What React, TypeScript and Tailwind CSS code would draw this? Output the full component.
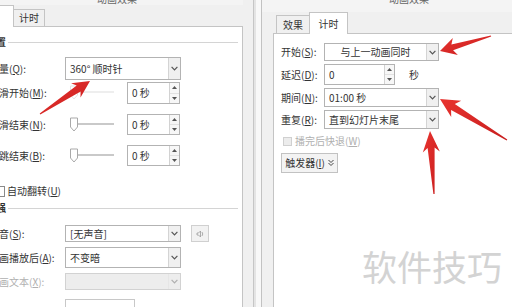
import React from "react";

const FONT = "font-['Noto_Sans_CJK_SC','Noto_Sans',sans-serif]";

function Chevron() {
  return (
    <svg width="7" height="5" viewBox="0 0 7 5">
      <path d="M0.6 0.8 L3.5 3.8 L6.4 0.8" fill="none" stroke="#555" strokeWidth="1.2" />
    </svg>
  );
}

function Dropdown({
  text,
  className,
  disabled,
  center,
}: {
  text: string;
  className: string;
  disabled?: boolean;
  center?: boolean;
}) {
  return (
    <div
      className={`flex border ${
        disabled ? "border-[#d2d2d2] bg-[#ededed]" : "border-[#b3b3b3] bg-white"
      } ${className}`}
    >
      <div
        className={`flex-1 flex items-center ${
          center ? "justify-center" : "pl-[4px]"
        } text-[10px] leading-none text-[#333] whitespace-nowrap overflow-hidden`}
      >
        {text}
      </div>
      <div
        className={`w-[12px] flex items-center justify-center border-l ${
          disabled ? "border-[#dcdcdc] opacity-40" : "border-[#d4d4d4] bg-[#f0f0f0]"
        }`}
      >
        <Chevron />
      </div>
    </div>
  );
}

function Spin({ text, className }: { text: string; className: string }) {
  return (
    <div className={`flex border border-[#b3b3b3] bg-white ${className}`}>
      <div className="flex-1 pl-[4px] flex items-center text-[10px] leading-none text-[#333] whitespace-nowrap">
        {text}
      </div>
      <div className="w-[10px] flex flex-col border-l border-[#d2d2d2] bg-[#f7f7f7]">
        <div className="flex-1 flex items-center justify-center border-b border-[#e2e2e2]">
          <svg width="5" height="3" viewBox="0 0 5 3">
            <path d="M0 3 L2.5 0 L5 3Z" fill="#555" />
          </svg>
        </div>
        <div className="flex-1 flex items-center justify-center">
          <svg width="5" height="3" viewBox="0 0 5 3">
            <path d="M0 0 L2.5 3 L5 0Z" fill="#555" />
          </svg>
        </div>
      </div>
    </div>
  );
}

function Slider({ faded }: { faded?: boolean }) {
  return (
    <svg width="44" height="16" viewBox="0 0 44 16" className={faded ? "opacity-30" : ""}>
      <line x1="4" y1="7" x2="44" y2="7" stroke="#c9c9c9" strokeWidth="2" />
      <path d="M0.5 1 L7.5 1 L7.5 10 L4 14 L0.5 10Z" fill="#fff" stroke="#a9a9a9" strokeWidth="1" />
    </svg>
  );
}

function Label({ children, faded, className }: { children: React.ReactNode; faded?: boolean; className: string }) {
  return (
    <div
      className={`${className} shrink-0 text-[10px] leading-none whitespace-nowrap ${
        faded ? "text-[#b0b0b0]" : "text-[#333]"
      }`}
    >
      {children}
    </div>
  );
}

function SectionHeader({ text, className }: { text: string; className: string }) {
  return (
    <div className={`flex items-center h-[14px] ${className}`}>
      <div className="w-[22px] text-[10px] leading-none font-bold text-[#333]">{text}</div>
      <div className="flex-1 h-px bg-[#d4d4d4] mr-[4px]" />
    </div>
  );
}

function arrowPoints(
  tx: number,
  ty: number,
  hx: number,
  hy: number,
  headLen: number,
  headW: number,
  shaftW: number
) {
  const dx = hx - tx;
  const dy = hy - ty;
  const L = Math.hypot(dx, dy);
  const ux = dx / L;
  const uy = dy / L;
  const px = -uy;
  const py = ux;
  const bx = hx - ux * headLen;
  const by = hy - uy * headLen;
  const nx = hx - ux * headLen * 0.8;
  const ny = hy - uy * headLen * 0.8;
  const pts = [
    [tx + px * 0.6, ty + py * 0.6],
    [nx + (px * shaftW) / 2, ny + (py * shaftW) / 2],
    [bx + (px * headW) / 2, by + (py * headW) / 2],
    [hx, hy],
    [bx - (px * headW) / 2, by - (py * headW) / 2],
    [nx - (px * shaftW) / 2, ny - (py * shaftW) / 2],
    [tx - px * 0.6, ty - py * 0.6],
  ];
  return pts.map((p) => `${p[0].toFixed(1)},${p[1].toFixed(1)}`).join(" ");
}

function Arrows() {
  const arrows = [
    { t: [40, 114], h: [90, 81], hl: 17, hw: 17, sw: 7 },
    { t: [491, 36], h: [440, 51], hl: 16, hw: 18, sw: 6 },
    { t: [507, 140], h: [440, 99], hl: 19, hw: 19, sw: 7 },
    { t: [434, 194], h: [430, 131], hl: 21, hw: 17, sw: 7 },
  ];
  return (
    <svg className="absolute left-0 top-0 pointer-events-none" width="512" height="307" viewBox="0 0 512 307">
      <defs>
        <linearGradient id="rg" x1="0" y1="0" x2="1" y2="1">
          <stop offset="0" stopColor="#e8332f" />
          <stop offset="1" stopColor="#c81e1e" />
        </linearGradient>
      </defs>
      {arrows.map((a, i) => (
        <polygon
          key={i}
          points={arrowPoints(a.t[0], a.t[1], a.h[0], a.h[1], a.hl, a.hw, a.sw)}
          fill="url(#rg)"
        />
      ))}
    </svg>
  );
}

function LeftDialog() {
  return (
    <div className="w-[256px] shrink-0 flex bg-[#f0f0f0]">
      <div className="w-[243px] flex flex-col overflow-hidden">
        <div className="h-[12px] pl-[97px] bg-[#f4f4f4]">
          <div className="-mt-[7px] text-[10px] leading-[12px] text-[#666]">动画效果</div>
        </div>
        <div className="h-[21px] flex items-end">
          <div className="w-[14px] h-[22px] -mb-px relative z-10 bg-white border-t border-r border-[#c4c4c4]" />
          <div className="w-[31px] h-[17px] bg-[#f0f0f0] border-t border-r border-[#c4c4c4] flex items-center justify-center text-[10px] leading-none text-[#333]">
            计时
          </div>
        </div>
        <div className="flex-1 bg-white border-t border-r border-[#c4c4c4]">
          <div className="-ml-[14px] flex flex-col">
            <SectionHeader text="设置" className="mt-[8px]" />
            <div className="pl-[3px] flex flex-col">
              <div className="mt-[8px] h-[23px] flex items-center">
                <Label className="w-[76px]">
                  数量(<u>Q</u>):
                </Label>
                <Dropdown text="360° 顺时针" className="w-[116px] h-full" />
              </div>
              <div className="mt-[2px] h-[22px] flex items-center">
                <Label className="w-[76px]">
                  平滑开始(<u>M</u>):
                </Label>
                <div className="ml-[5px] flex items-center">
                  <Slider faded />
                </div>
                <Spin text="0 秒" className="ml-[13px] w-[53px] h-full" />
              </div>
              <div className="mt-[10px] h-[21px] flex items-center">
                <Label className="w-[76px]">
                  平滑结束(<u>N</u>):
                </Label>
                <div className="ml-[5px] flex items-center">
                  <Slider />
                </div>
                <Spin text="0 秒" className="ml-[13px] w-[53px] h-full" />
              </div>
              <div className="mt-[10px] h-[21px] flex items-center">
                <Label className="w-[76px]">
                  弹跳结束(<u>B</u>):
                </Label>
                <div className="ml-[5px] flex items-center">
                  <Slider />
                </div>
                <Spin text="0 秒" className="ml-[13px] w-[53px] h-full" />
              </div>
              <div className="mt-[18px] h-[14px] flex items-center">
                <div className="ml-[5px] w-[11px] h-[11px] border border-[#8a8a8a] bg-white" />
                <div className="ml-[2px] text-[10px] leading-none text-[#333]">
                  自动翻转(<u>U</u>)
                </div>
              </div>
            </div>
            <SectionHeader text="增强" className="mt-[3px]" />
            <div className="pl-[3px] flex flex-col">
              <div className="mt-[10px] h-[17px] flex items-center">
                <Label className="w-[76px]">
                  声音(<u>S</u>):
                </Label>
                <Dropdown text="[无声音]" className="w-[116px] h-full" />
                <div className="ml-[10px] w-[18px] h-[17px] border border-[#d0d0d0] bg-[#f2f2f2] flex items-center justify-center">
                  <svg width="8" height="10" viewBox="0 0 8 10">
                    <path d="M1 4 L2.5 4 L4.5 2 L4.5 8 L2.5 6 L1 6Z" fill="none" stroke="#9a9a9a" strokeWidth="0.8" />
                    <path d="M6 3 Q7.5 5 6 7" fill="none" stroke="#9a9a9a" strokeWidth="0.8" />
                  </svg>
                </div>
              </div>
              <div className="mt-[5px] h-[21px] flex items-center">
                <Label className="w-[76px]">
                  动画播放后(<u>A</u>):
                </Label>
                <Dropdown text="不变暗" className="w-[116px] h-full" />
              </div>
              <div className="mt-[5px] h-[17px] flex items-center">
                <Label className="w-[76px]" faded>
                  动画文本(<u>X</u>):
                </Label>
                <Dropdown text="" disabled className="w-[116px] h-full" />
              </div>
              <div className="mt-[9px] h-[20px] flex items-center">
                <div className="w-[76px]" />
                <div className="w-[70px] h-full border border-[#c8c8c8] bg-white" />
              </div>
            </div>
          </div>
        </div>
      </div>
      <div className="w-[10px] bg-[#f0f0f0]" />
      <div className="w-px bg-[#c6c6c6]" />
      <div className="w-[2px] bg-[#e4e4e4]" />
    </div>
  );
}

function RightDialog() {
  return (
    <div className="flex-1 flex">
      <div className="w-[5px] bg-[#f8f8f8]" />
      <div className="w-px bg-[#c2c2c2]" />
      <div className="flex-1 flex flex-col bg-[#f0f0f0]">
        <div className="h-[12px] pl-[127px] bg-[#f4f4f4]">
          <div className="-mt-[7px] text-[10px] leading-[12px] text-[#666]">动画效果</div>
        </div>
        <div className="h-[21px] flex items-end pl-[14px]">
          <div className="w-[33px] h-[18px] bg-[#f0f0f0] border-t border-l border-[#c4c4c4] flex items-center justify-center text-[10px] leading-none text-[#333]">
            效果
          </div>
          <div className="w-[39px] h-[22px] -mb-px relative z-10 bg-white border-t border-l border-r border-[#c4c4c4] flex items-center justify-center text-[10px] leading-none text-[#333]">
            计时
          </div>
        </div>
        <div className="flex-1 ml-[11px] bg-white border-t border-l border-[#c4c4c4]">
          <div className="pl-[7px] flex flex-col">
            <div className="mt-[9px] h-[18px] flex items-center">
              <Label className="w-[43px]">
                开始(<u>S</u>):
              </Label>
              <Dropdown text="与上一动画同时" center className="w-[115px] h-full" />
            </div>
            <div className="mt-[3px] h-[21px] flex items-center">
              <Label className="w-[43px]">
                延迟(<u>D</u>):
              </Label>
              <Spin text="0" className="w-[71px] h-full" />
              <div className="ml-[14px] text-[10px] leading-none text-[#333]">秒</div>
            </div>
            <div className="mt-[3px] h-[19px] flex items-center">
              <Label className="w-[43px]">
                期间(<u>N</u>):
              </Label>
              <Dropdown text="01:00 秒" className="w-[115px] h-full" />
            </div>
            <div className="mt-[3px] h-[19px] flex items-center">
              <Label className="w-[43px]">
                重复(<u>R</u>):
              </Label>
              <Dropdown text="直到幻灯片末尾" className="w-[115px] h-full" />
            </div>
            <div className="mt-[6px] h-[12px] flex items-center">
              <div className="ml-[2px] w-[9px] h-[9px] border border-[#d0d0d0] bg-[#ececec]" />
              <div className="ml-[3px] text-[10px] leading-none text-[#b0b0b0]">
                播完后快退(<u>W</u>)
              </div>
            </div>
            <div className="mt-[6px] h-[20px] w-[57px] border border-[#c2c2c2] bg-[#f3f3f3] flex items-center justify-center gap-[3px]">
              <span className="text-[10px] leading-none text-[#333]">
                触发器(<u>I</u>)
              </span>
              <svg width="6" height="8" viewBox="0 0 6 8">
                <path d="M0.5 1 L3 3.5 L5.5 1 M0.5 4 L3 6.5 L5.5 4" fill="none" stroke="#444" strokeWidth="1" />
              </svg>
            </div>
          </div>
        </div>
      </div>
    </div>
  );
}

export default function App() {
  return (
    <div className={`relative w-[512px] h-[307px] overflow-hidden bg-white flex ${FONT}`}>
      <LeftDialog />
      <RightDialog />
      <Arrows />
      <div className="absolute left-[362px] top-[248px] text-[35px] leading-none text-[#d3d3d3] whitespace-nowrap pointer-events-none">
        软件技巧
      </div>
    </div>
  );
}
